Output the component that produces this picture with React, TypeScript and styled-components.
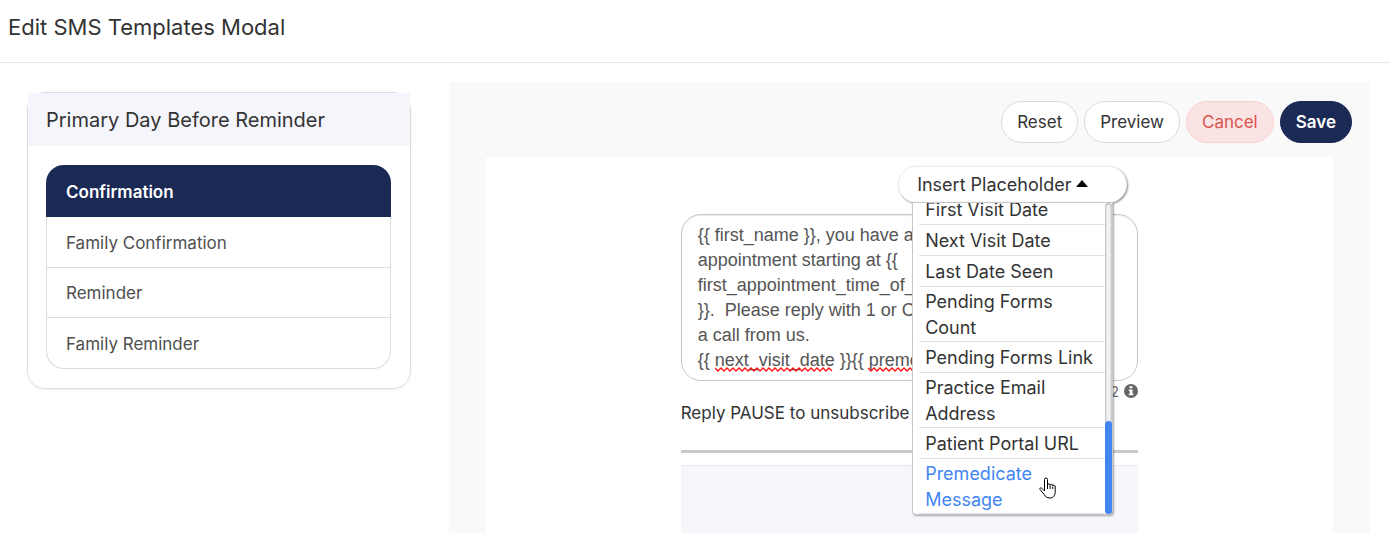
import React, { useState } from "react";
import styled, { createGlobalStyle, css } from "styled-components";

const navy = "#1b2a55";

const GlobalStyle = createGlobalStyle`
  *, *::before, *::after { box-sizing: border-box; }
  html, body { margin: 0; height: 100%; overflow: hidden; background: #fff; }
  body, button, textarea { font-family: Inter, "Liberation Sans", sans-serif; }
  #root { height: 100%; }
`;

const Page = styled.div`
  display: flex;
  flex-direction: column;
  height: 100%;
  overflow: hidden;
  color: #333;
`;

const Header = styled.header`
  flex: none;
  padding: 11px 8px 19px;
  border-bottom: 1px solid #e5e5e5;
`;

const Title = styled.h1`
  margin: 0;
  font-size: 22px;
  line-height: 32px;
  font-weight: 400;
`;

const Body = styled.main`
  flex: 1;
  display: grid;
  grid-template-columns: minmax(0, 5fr) minmax(0, 12fr);
  column-gap: 38px;
  padding: 19px 20px 0 27px;
  min-height: 0;
`;

const Card = styled.section`
  align-self: start;
  margin-top: 10px;
  border: 1px solid #dcdcdc;
  border-radius: 18px;
  box-shadow: 0 1px 2px rgba(0, 0, 0, 0.06);
`;

const CardTitle = styled.h2`
  margin: 0;
  padding: 11px 18px 10px;
  background: #f5f6fb;
  font-size: 20px;
  line-height: 32px;
  font-weight: 400;
`;

const TemplateList = styled.nav`
  margin: 19px;
  margin-left: 18px;
  display: flex;
  flex-direction: column;
  border: 1px solid #dcdcdc;
  border-top: 0;
  border-radius: 18px;
`;

const TemplateButton = styled.button<{ $active?: boolean }>`
  padding: 2px 19px 0;
  height: 50px;
  border: 0;
  background: none;
  text-align: left;
  font-size: 17px;
  color: #4f4f4f;
  & + & { box-shadow: 0 1px 0 #dcdcdc; }
  &:last-child { height: 51px; box-shadow: none; }
  ${(p) => p.$active && css`
    margin: 0 -1px;
    padding: 2px 20px 0;
    height: 52px;
    border-radius: 18px 18px 0 0;
    background: ${navy};
    color: #fff;
    font-weight: 600;
  `}
`;

const Workspace = styled.section`
  display: flex;
  flex-direction: column;
  padding: 19px 18px 0 37px;
  background: #f9f9f9;
  min-height: 0;
`;

const Toolbar = styled.div`
  display: flex;
  justify-content: flex-end;
  gap: 6px;
`;

const PillButton = styled.button<{ $kind?: "danger" | "primary" }>`
  height: 42px;
  padding: 0 15px;
  border: 1px solid #dadae6;
  border-radius: 21px;
  background: #fff;
  color: #333;
  font-size: 17px;
  ${(p) => p.$kind === "danger" && css`
    border-color: #f9d0d0;
    background: #f9e4e3;
    color: #d9534f;
  `}
  ${(p) => p.$kind === "primary" && css`
    border-color: ${navy};
    background: ${navy};
    color: #fff;
    font-weight: 600;
  `}
`;

const Canvas = styled.div`
  flex: 1;
  display: flex;
  flex-direction: column;
  align-items: center;
  margin: 14px 19px 0 0;
  padding-top: 9px;
  background: #fff;
  min-height: 0;
`;

const Editor = styled.div`
  width: 54%;
  display: flex;
  flex-direction: column;
  flex: 1;
  min-height: 0;
`;

const Dropdown = styled.div`
  position: relative;
  z-index: 1;
  align-self: flex-end;
  width: 229px;
  margin-right: 11px;
`;

const DropdownToggle = styled.button`
  display: flex;
  align-items: center;
  gap: 5px;
  width: 100%;
  height: 37px;
  padding: 0 18px;
  border: 1px solid #efefef;
  border-radius: 19px;
  background: #fff;
  box-shadow: 1px 1px 2px rgba(0, 0, 0, 0.45);
  font-size: 18px;
  color: #333;
`;

const Menu = styled.div`
  position: absolute;
  top: 36px;
  left: 14px;
  display: flex;
  width: 201px;
  height: 313px;
  border: 1px solid #c8c8c8;
  border-radius: 0 0 4px 4px;
  background: #fff;
  box-shadow: 1px 1px 2px rgba(0, 0, 0, 0.35);
`;

const MenuItems = styled.ul`
  flex: 1;
  display: flex;
  flex-direction: column;
  justify-content: flex-end;
  margin: 0;
  padding: 0 0 0 6px;
  overflow: hidden;
  list-style: none;
`;

const MenuItem = styled.li`
  flex: none;
  display: flex;
  align-items: center;
  min-height: 31px;
  border-bottom: 1px solid #e0e0e0;
`;

const MenuButton = styled.button<{ $hover: boolean }>`
  padding: 2px 6px 0;
  border: 0;
  background: none;
  text-align: left;
  font-size: 18px;
  line-height: 26px;
  color: ${(p) => (p.$hover ? "#4285f4" : "#333")};
`;

const ScrollTrack = styled.div`
  display: flex;
  flex-direction: column;
  justify-content: flex-end;
  width: 7px;
  border-radius: 4px;
  background: #f5f5f5;
  box-shadow: inset 0 0 3px rgba(0, 0, 0, 0.5);
`;

const ScrollThumb = styled.div`
  height: 30%;
  border-radius: 4px;
  background: #4285f4;
`;

const Pointer = styled.svg`
  position: absolute;
  left: 126px;
  top: 274px;
  pointer-events: none;
`;

const MessageField = styled.div`
  position: relative;
  margin-top: 11px;
`;

const Message = styled.textarea`
  display: block;
  width: 100%;
  height: 167px;
  padding: 8px 16px;
  border: 1px solid #c8c8c8;
  border-radius: 20px;
  box-shadow: inset 0 1px 1px rgba(0, 0, 0, 0.08);
  background: #fff;
  font-family: "Liberation Sans", Arial, sans-serif;
  font-size: 18px;
  line-height: 25px;
  color: #555;
  resize: none;
  overflow: hidden;
  outline: 0;
`;

const Squiggle = styled.svg`
  position: absolute;
  left: 34px;
  top: 153px;
  pointer-events: none;
`;

const Counter = styled.div`
  display: flex;
  justify-content: flex-end;
  align-items: center;
  gap: 5px;
  height: 20px;
  font-size: 14px;
  color: #666;
`;

const Unsubscribe = styled.p`
  margin: 0;
  font-size: 17px;
  line-height: 24px;
`;

const Divider = styled.hr`
  width: 100%;
  margin: 25px 0 12px;
  border: 0;
  border-top: 3px solid #c9c9c9;
`;

const Panel = styled.div`
  flex: 1;
  border-top: 1px solid #e8e8e8;
  background: #f6f7fa;
  overflow: hidden;
`;

const templates = ["Confirmation", "Family Confirmation", "Reminder", "Family Reminder"];

const placeholders = [
  "First Visit Date",
  "Next Visit Date",
  "Last Date Seen",
  "Pending Forms Count",
  "Pending Forms Link",
  "Practice Email Address",
  "Patient Portal URL",
  "Premedicate Message",
];

const initialMessage = `{{ first_name }}, you have an
appointment starting at {{
first_appointment_time_of_day
}}.  Please reply with 1 or C for
a call from us.
{{ next_visit_date }}{{ premedicate }}`;

const wave = (from: number, to: number) => {
  let d = `M${from} 1`;
  for (let x = from, i = 0; x < to; x += 3, i++) d += `l3 ${i % 2 ? -3 : 3}`;
  return d;
};

export default function App() {
  const [active, setActive] = useState(templates[0]);
  const [hovered, setHovered] = useState("Premedicate Message");
  const [message, setMessage] = useState(initialMessage);

  return (
    <>
      <GlobalStyle />
      <Page>
        <Header>
          <Title>Edit SMS Templates Modal</Title>
        </Header>
        <Body>
          <Card>
            <CardTitle>Primary Day Before Reminder</CardTitle>
            <TemplateList aria-label="Templates">
              {templates.map((name) => (
                <TemplateButton key={name} $active={name === active} onClick={() => setActive(name)}>
                  {name}
                </TemplateButton>
              ))}
            </TemplateList>
          </Card>
          <Workspace>
            <Toolbar>
              <PillButton>Reset</PillButton>
              <PillButton>Preview</PillButton>
              <PillButton $kind="danger">Cancel</PillButton>
              <PillButton $kind="primary">Save</PillButton>
            </Toolbar>
            <Canvas>
              <Editor>
                <Dropdown>
                  <DropdownToggle aria-expanded="true">
                    Insert Placeholder
                    <svg width="12" height="12" viewBox="0 0 12 12" aria-hidden="true">
                      <path d="M0 8 6 1l6 7z" fill="#000" />
                    </svg>
                  </DropdownToggle>
                  <Menu>
                    <MenuItems>
                      {placeholders.map((name) => (
                        <MenuItem key={name}>
                          <MenuButton $hover={name === hovered} onMouseEnter={() => setHovered(name)}>
                            {name}
                          </MenuButton>
                        </MenuItem>
                      ))}
                    </MenuItems>
                    <ScrollTrack>
                      <ScrollThumb />
                    </ScrollTrack>
                    <Pointer width="17" height="22" viewBox="0 0 17 22" aria-hidden="true">
                      <path
                        d="M5.5 14V2.5a1.5 1.5 0 0 1 3 0V8a1.3 1.3 0 0 1 2.6.3 1.3 1.3 0 0 1 2.6.7 1.3 1.3 0 0 1 2.5 1v5.500c0 3-2 5.500-5 5.500-3.500 0-5-1.500-6-3.500L1 12.500c-.6-1.500 1-2.300 2-1.200z"
                        fill="#fff"
                        stroke="#000"
                      />
                      <path d="M8.500 8v4M11.100 8.500V12M13.700 9.500V12" stroke="#000" />
                    </Pointer>
                  </Menu>
                </Dropdown>
                <MessageField>
                  <Message
                    aria-label="Message"
                    spellCheck={false}
                    value={message}
                    onChange={(e) => setMessage(e.target.value)}
                  />
                  <Squiggle width="260" height="6" viewBox="0 0 260 6" aria-hidden="true">
                    <path d={wave(0, 117) + wave(153, 240)} fill="none" stroke="#f11" strokeWidth="1.3" />
                  </Squiggle>
                </MessageField>
                <Counter>
                  2
                  <svg width="14" height="14" viewBox="0 0 14 14" role="img" aria-label="Info">
                    <circle cx="7" cy="7" r="7" fill="#666" />
                    <path d="M5.500 2.300h3v2h-3zM4.800 5.500h3.700v4.300h1v1.500H4.800V9.800h1V7h-1z" fill="#fff" />
                  </svg>
                </Counter>
                <Unsubscribe>Reply PAUSE to unsubscribe</Unsubscribe>
                <Divider />
                <Panel />
              </Editor>
            </Canvas>
          </Workspace>
        </Body>
      </Page>
    </>
  );
}
